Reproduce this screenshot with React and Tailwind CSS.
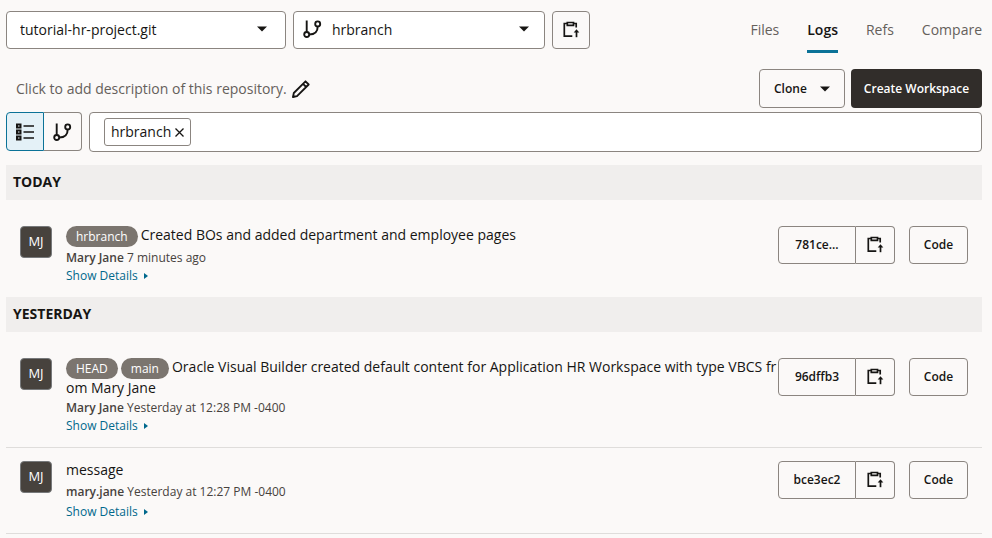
import React from 'react';

const groups = [
  {
    title: 'Today',
    commits: [
      {
        id: '781ce...',
        tags: ['hrbranch'],
        message: 'Created BOs and added department and employee pages',
        author: 'Mary Jane',
        when: '7 minutes ago',
      },
    ],
  },
  {
    title: 'Yesterday',
    commits: [
      {
        id: '96dffb3',
        tags: ['HEAD', 'main'],
        message:
          'Oracle Visual Builder created default content for Application HR Workspace with type VBCS from Mary Jane',
        author: 'Mary Jane',
        when: 'Yesterday at 12:28 PM -0400',
        divider: true,
      },
      {
        id: 'bce3ec2',
        tags: [],
        message: 'message',
        author: 'mary.jane',
        when: 'Yesterday at 12:27 PM -0400',
        divider: true,
      },
    ],
  },
];

function BranchIcon() {
  return (
    <svg className="size-5 shrink-0" viewBox="0 0 20 20" fill="none" stroke="currentColor" strokeWidth="1.9" aria-hidden="true">
      <path d="M3.700 1.500v11.500" />
      <circle cx="3.700" cy="15.500" r="2.500" />
      <circle cx="14.700" cy="4.900" r="2.500" />
      <path d="M14.700 7.500c0 5-3 8-8.500 8" />
    </svg>
  );
}

function CopyIcon() {
  return (
    <svg className="size-5 shrink-0" viewBox="0 0 20 20" fill="none" stroke="currentColor" strokeWidth="1.700" aria-hidden="true">
      <path d="M6 3.500H3.300v12.700h8M13 3.500h2.200v4" />
      <path d="M6.300 2.500h6.200v2.800H6.300z" />
      <path d="M15.500 17.200v-5.500" />
      <path d="M12.700 12.500l2.800-3.300 2.800 3.300z" fill="currentColor" stroke="none" />
    </svg>
  );
}

function ListIcon() {
  return (
    <svg className="size-5 shrink-0" viewBox="0 0 20 20" fill="none" stroke="currentColor" strokeWidth="2" aria-hidden="true">
      <path d="M2 2.500h3.500v3H2zM2 8.500h3.500v3H2zM2 14.500h3.500v3H2z" />
      <path d="M8.500 4H19M8.500 10H19M8.500 16H19" strokeWidth="1.600" />
    </svg>
  );
}

function PencilIcon() {
  return (
    <svg className="size-5" viewBox="0 0 20 20" fill="none" stroke="currentColor" strokeWidth="1.800" strokeLinejoin="round" aria-hidden="true">
      <path d="M2 18l0.800-4L14.500 2.300l3.200 3.200L6 17.200zM12 4.800l3.200 3.200" />
      <path d="M1.300 18.700l0.900-3.200 2.300 2.300z" fill="currentColor" stroke="none" />
    </svg>
  );
}

function Caret({ className = '' }) {
  return (
    <svg className={`h-[6px] w-[10px] ${className}`} viewBox="0 0 10 6" fill="currentColor" aria-hidden="true">
      <path d="M0 0.500h10L5 5.500z" />
    </svg>
  );
}

function Picker({ label, value, className, children, inset, caret }) {
  return (
    <div className={`relative h-[38px] ${className}`}>
      {children}
      <select
        aria-label={label}
        defaultValue={value}
        className={`h-full w-full appearance-none rounded border border-[#8b8580] bg-white pr-8 text-sm text-[#161513] ${inset}`}
      >
        <option>{value}</option>
      </select>
      <Caret className={`pointer-events-none absolute top-[15px] ${caret}`} />
    </div>
  );
}

function Commit({ commit }) {
  const roomy = commit.tags.length === 0;
  return (
    <li className={`flex items-start pt-[13px] pr-3.5 pb-3 pl-3.5 ${commit.divider ? 'border-b border-[#dfdddb]' : ''}`}>
      <div className="flex size-8 shrink-0 items-center justify-center rounded border border-[#77797b] bg-[#47423d] text-[13px] font-medium text-white">
        MJ
      </div>
      <div className="ml-3.5 min-w-0 flex-1">
        <p className="text-sm leading-[18px] break-all">
          {commit.tags.map((tag) => (
            <span
              key={tag}
              className="mr-[3px] inline-block h-[21px] rounded-full bg-[#7b756f] px-2.5 align-middle text-xs leading-[21px] text-white"
            >
              {tag}
            </span>
          ))}
          {commit.message}
        </p>
        <p className={`mt-0.5 text-xs text-[#47423d] ${roomy ? 'leading-[21px]' : 'leading-[18px]'}`}>
          <strong className="font-semibold">{commit.author}</strong> {commit.when}
        </p>
        <button
          type="button"
          className={`flex items-center gap-1.5 text-xs text-[#00688c] ${roomy ? 'leading-[19px]' : 'leading-[18px]'}`}
        >
          Show Details
          <svg className="h-[6px] w-[4px]" viewBox="0 0 4 6" fill="currentColor" aria-hidden="true">
            <path d="M0 0l4 3-4 3z" />
          </svg>
        </button>
      </div>
      <div className="flex shrink-0 text-xs font-semibold">
        <button type="button" className="h-[38px] w-[78px] rounded-l border border-[#8b8580]">
          {commit.id}
        </button>
        <button
          type="button"
          aria-label="Copy commit ID"
          className="flex h-[38px] w-[39px] items-center justify-center rounded-r border border-l-0 border-[#8b8580]"
        >
          <CopyIcon />
        </button>
        <button type="button" className="ml-3.5 h-[38px] w-[59px] rounded border border-[#8b8580]">
          Code
        </button>
      </div>
    </li>
  );
}

export default function App() {
  return (
    <main className="min-h-screen bg-[#fbf9f8] px-1.5 pt-[11px] pr-2.5 font-['Open_Sans',sans-serif] text-[#161513]">
      <header className="flex items-start">
        <Picker label="Repository" value="tutorial-hr-project.git" className="w-[280px]" inset="pl-[13px]" caret="right-[19px]" />
        <Picker label="Branch" value="hrbranch" className="ml-[7px] w-[252px]" inset="pl-[38px]" caret="right-4">
          <span className="pointer-events-none absolute top-2 left-2.5">
            <BranchIcon />
          </span>
        </Picker>
        <button
          type="button"
          aria-label="Copy branch name"
          className="ml-[7px] flex h-[38px] w-[38px] items-center justify-center rounded border border-[#8b8580]"
        >
          <CopyIcon />
        </button>
        <nav className="ml-auto flex gap-7 text-sm leading-[38px] text-[#65605b]">
          <a href="#files">Files</a>
          <a href="#logs" aria-current="page" className="border-b-[3px] border-[#0b7297] pb-px font-semibold text-[#161513]">
            Logs
          </a>
          <a href="#refs">Refs</a>
          <a href="#compare">Compare</a>
        </nav>
      </header>

      <section className="mt-4 flex items-center">
        <p className="pl-2.5 text-sm text-[#65605b]">Click to add description of this repository.</p>
        <button type="button" aria-label="Edit description" className="ml-1">
          <PencilIcon />
        </button>
        <button
          type="button"
          className="ml-auto flex h-[39px] w-[86px] items-center justify-between rounded border border-[#8b8580] px-3.5 text-xs font-semibold"
        >
          Clone
          <Caret />
        </button>
        <button type="button" className="ml-1.5 h-[39px] w-[131px] rounded bg-[#312d2a] text-xs font-semibold text-white">
          Create Workspace
        </button>
      </section>

      <section className="mt-1 flex">
        <button
          type="button"
          aria-label="List view"
          aria-pressed="true"
          className="flex h-[39px] w-[38px] items-center justify-center rounded-l border border-[#0b7297] bg-[#e4f1f7]"
        >
          <ListIcon />
        </button>
        <button
          type="button"
          aria-label="Graph view"
          aria-pressed="false"
          className="flex h-[39px] w-[38px] items-center justify-center rounded-r border border-l-0 border-[#8b8580]"
        >
          <BranchIcon />
        </button>
        <div className="ml-[7px] flex h-10 flex-1 items-center gap-2 rounded border border-[#8b8580] bg-white pl-3.5">
          <span className="flex h-7 shrink-0 items-center rounded-[3px] border border-[#8b8580] px-1.5 text-sm">
            hrbranch
            <button type="button" aria-label="Remove hrbranch" className="ml-1">
              <svg className="size-[9px]" viewBox="0 0 9 9" stroke="currentColor" strokeWidth="1.300" aria-hidden="true">
                <path d="M0.500 0.500l8 8M8.500 0.500l-8 8" />
              </svg>
            </button>
          </span>
          <input type="text" aria-label="Filter logs" className="min-w-0 flex-1 outline-none" />
        </div>
      </section>

      <div className="pt-[13px]">
        {groups.map((group) => (
          <section key={group.title}>
            <h2 className="mb-[13px] bg-[#f0eeed] px-[7px] pb-px text-sm leading-[34px] font-bold uppercase">{group.title}</h2>
            <ul>
              {group.commits.map((commit) => (
                <Commit key={commit.id} commit={commit} />
              ))}
            </ul>
          </section>
        ))}
      </div>
    </main>
  );
}
